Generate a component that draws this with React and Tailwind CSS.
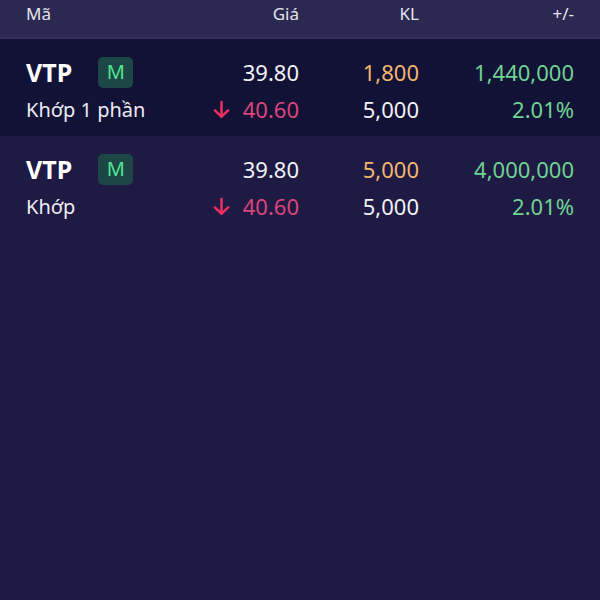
const ROWS = [
  { code: 'VTP', status: 'Khớp 1 phần', price: '39.80', vol: '1,800', value: '1,440,000', last: '40.60', lastVol: '5,000', pct: '2.01%', active: true },
  { code: 'VTP', status: 'Khớp', price: '39.80', vol: '5,000', value: '4,000,000', last: '40.60', lastVol: '5,000', pct: '2.01%', active: false },
];

const ArrowDown = () => (
  <svg viewBox="0 0 20 20" fill="none" stroke="#f2305f" strokeWidth="2.6"
    strokeLinecap="round" strokeLinejoin="round" className="w-[19px] h-[19px]">
    <line x1="10" y1="2" x2="10" y2="17.5" />
    <polyline points="3 11 10 17.5 17 11" />
  </svg>
);

const OrderRow = ({ r }) => (
  <div className={`grid grid-cols-[1fr_120px_120px_155px] px-[26px] pt-[16px] pb-[6px] ${r.active ? 'bg-[#121237]' : ''}`}>
    <div className="flex items-center h-[34px] gap-[26px]">
      <span className="text-[25px] font-bold text-white leading-none">{r.code}</span>
      <span className="w-[35px] h-[31px] rounded-[5px] bg-[#1c4746] text-[#52e390] text-[20px] flex items-center justify-center leading-none">M</span>
    </div>
    <div className="h-[34px] flex items-center justify-end text-[22px] text-[#f1f1f5]">{r.price}</div>
    <div className="h-[34px] flex items-center justify-end text-[22px] text-[#f3b66e]">{r.vol}</div>
    <div className="h-[34px] flex items-center justify-end text-[22px] text-[#6fd392]">{r.value}</div>

    <div className="h-[41px] flex items-center text-[20px] text-[#ececf2]">{r.status}</div>
    <div className="h-[41px] flex items-center justify-end gap-[12px] text-[22px] text-[#dc4579]">
      <ArrowDown />
      <span>{r.last}</span>
    </div>
    <div className="h-[41px] flex items-center justify-end text-[22px] text-[#f1f1f5]">{r.lastVol}</div>
    <div className="h-[41px] flex items-center justify-end text-[22px] text-[#6fd392]">{r.pct}</div>
  </div>
);

export default function App() {
  return (
    <div className="w-[600px] h-[600px] bg-[#1e1a43] overflow-hidden" style={{ fontFamily: '"Noto Sans", "Open Sans", sans-serif' }}>
      {/* header */}
      <div className="grid grid-cols-[1fr_120px_120px_155px] px-[26px] h-[39px] bg-[#2b2951] border-b-2 border-[#35335b] items-start pt-[1px] text-[17px] text-[#e4e4ee]">
        <span>Mã</span>
        <span className="text-right">Giá</span>
        <span className="text-right">KL</span>
        <span className="text-right">+/-</span>
      </div>
      {ROWS.map((r, i) => <OrderRow key={i} r={r} />)}
    </div>
  );
}
